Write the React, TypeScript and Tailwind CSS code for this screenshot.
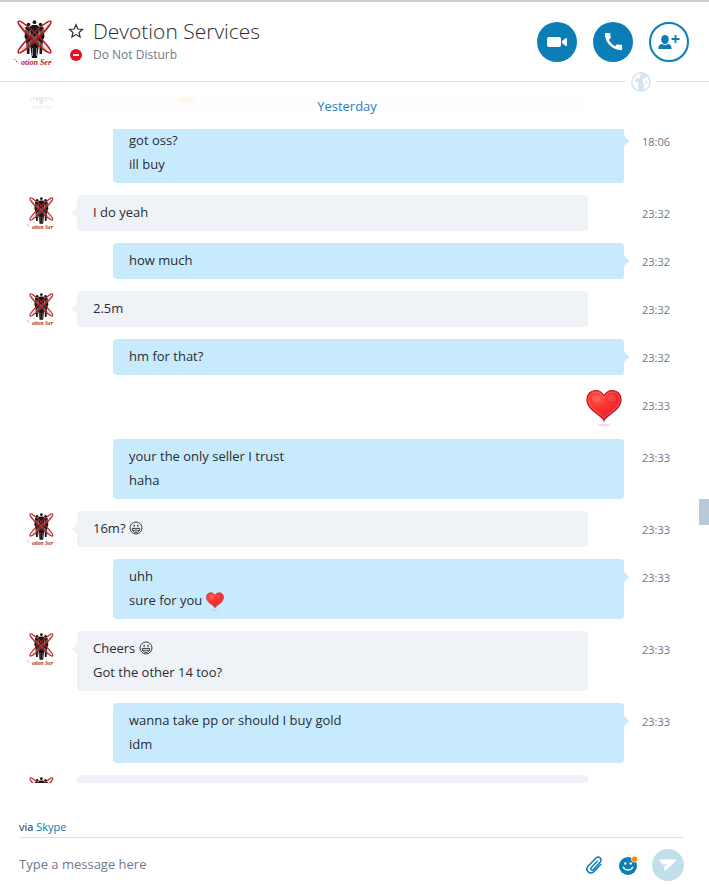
import React from 'react';
import { clsx } from 'clsx';
import { MdCall } from 'react-icons/md';

interface Message {
  id: number;
  own: boolean;
  time?: string;
  lines: React.ReactNode[];
  tail?: boolean;
  heart?: boolean;
}

const GrinIcon = ({ className }: { className?: string }) => (
  <svg viewBox="0 0 14 14" className={className} role="img" aria-label="grin">
    <circle cx="7" cy="7" r="6" fill="none" stroke="#3a3a42" strokeWidth="1" />
    <path d="M3.2 7.4h7.600c0 2.600-1.600 4-3.800 4s-3.800-1.400-3.800-4z" fill="none" stroke="#3a3a42" strokeWidth="1" />
    <path d="M3.800 9.300h6.400" stroke="#3a3a42" strokeWidth=".9" />
    <path d="M5.100 3.700v2M8.900 3.700v2" stroke="#3a3a42" strokeWidth="1.300" />
  </svg>
);

const HeartIcon = ({ id, className }: { id: string; className?: string }) => (
  <svg viewBox="0 0 36 38" className={className} role="img" aria-label="heart">
    <defs>
      <radialGradient id={id} cx=".33" cy=".28" r=".75">
        <stop offset="0" stopColor="#ff5a48" />
        <stop offset=".4" stopColor="#f93430" />
        <stop offset="1" stopColor="#e3202c" />
      </radialGradient>
    </defs>
    <ellipse cx="18" cy="36" rx="6" ry="1.300" fill="#ef6b6b" opacity=".25" />
    <path
      d="M18 31.500C16 26 1 21.500 1 10.800 1 5 4.800 1.500 9.500 1.500c4 0 6.800 2 8.500 5.300C19.700 3.500 22.500 1.500 26.500 1.500c4.700 0 8.500 3.500 8.500 9.300C35 21.500 20 26 18 31.500z"
      fill={`url(#${id})`}
      stroke="#c01526"
      strokeWidth="1.200"
    />
    <path
      d="M18 28.600C15 24 2.600 20 2.600 10.800c0-4.700 3-7.700 6.900-7.700 4 0 6.800 2.200 8.500 6 1.700-3.800 4.500-6 8.500-6 3.900 0 6.900 3 6.900 7.700C33.400 20 21 24 18 28.600z"
      fill="none"
      stroke="#ff8a84"
      strokeWidth=".7"
      opacity=".7"
    />
    <ellipse cx="10" cy="9.500" rx="4" ry="3.500" fill="#fff" opacity=".1" />
    <ellipse cx="26" cy="9" rx="4" ry="3.500" fill="#fff" opacity=".1" />
  </svg>
);

const Avatar = ({ className }: { className?: string }) => (
  <svg viewBox="0 0 40 50" className={className} role="img" aria-label="Devotion Services">
    <g fill="#161616">
      <circle cx="20.500" cy="5.200" r="1.900" />
      <circle cx="14.500" cy="7.500" r="1.800" />
      <circle cx="26.500" cy="7.500" r="1.800" />
      <path d="M18.300 8h4.400l4 2.500.8 9-1.500 4-1.500 7-1.500 10.500h-5L16.500 31 15 23.500l-1.500-4 .8-9z" />
      <path d="M11.500 10h4v27h-2.500l-1-14-1.500-3zM29.500 10h-4v27h2.500l1-14 1.500-3z" />
    </g>
    <path d="M16 13v6M25 13v6M18.500 31v8M22.500 31v8" stroke="#aaa" strokeWidth=".8" />
    <g fill="none" stroke="#d98a88" strokeWidth="2.600" opacity=".5">
      <path d="M6 8l27 25M35 8L8 33" />
    </g>
    <g fill="none" stroke="#b01e21" strokeWidth="1.500">
      <ellipse cx="20.500" cy="20" rx="3.400" ry="22.500" transform="rotate(-46 20.500 20)" />
      <ellipse cx="20.500" cy="20" rx="3.400" ry="22.500" transform="rotate(46 20.500 20)" />
    </g>
    <path d="M0 41.500l1.500 2 3 2.500M36 45.500l2-1M38 42v.5" fill="none" stroke="#b3272b" strokeWidth="1" strokeDasharray="1.500 1.500" />
    <text x="7" y="48" fill="#b3272b" className="font-['Liberation_Serif',serif] text-[8px] font-bold italic">
      otion Ser
    </text>
  </svg>
);

const StarIcon = () => (
  <svg viewBox="0 0 16 16" className="size-4">
    <path
      d="M8 1.700l1.900 4.300 4.700.4-3.600 3.100 1.100 4.600L8 11.600l-4.100 2.500L5 9.500 1.400 6.400l4.700-.4z"
      fill="none"
      stroke="#2b2c33"
      strokeWidth="1.200"
    />
  </svg>
);

const DndIcon = () => (
  <svg viewBox="0 0 12 12" className="size-3" role="img" aria-label="Do Not Disturb">
    <circle cx="6" cy="6" r="6" fill="#e81123" />
    <path d="M3 6h6" stroke="#fff" strokeWidth="1.800" />
  </svg>
);

const VideoIcon = () => (
  <svg viewBox="0 0 20 10" className="h-[10px] w-5" fill="#fff">
    <rect width="14" height="10" rx="2" />
    <path d="M15 4l3.500-2.700q1.500-1 1.500.4v6.600q0 1.400-1.500.4L15 6z" />
  </svg>
);

const AddPersonIcon = () => (
  <svg viewBox="0 0 22 16" className="h-4 w-[22px]" fill="#0a7eb5">
    <ellipse cx="7" cy="5.500" rx="3.800" ry="4.500" />
    <path d="M.5 15v-1.500c0-2.200 2-3.500 3.700-3.500 1.600 1.300 4 1.300 5.600 0 1.700 0 3.700 1.300 3.700 3.500V15z" />
    <path d="M17.500 1v8M13.500 5h8" stroke="#0a7eb5" strokeWidth="1.800" />
  </svg>
);

const GlobeIcon = () => (
  <svg viewBox="0 0 20 20" className="size-5">
    <circle cx="10" cy="10" r="10" fill="#d8e4ed" />
    <path
      d="M2 7.500C3 4.500 5.500 2.300 8.500 1.700l2 .8-1.700 1.300.5 1.500-1.800 1.500-2.500.3L3.500 8.800l3 1.700 1 2-.5 2 .8 3.300C4 16.500 1.700 13.500 1.600 10z"
      fill="#fff"
    />
    <path d="M12 7.200l2.500-1.700 2-.3c2.300 3 2.300 7.500-.3 10.500l-2.700 1.800-.7-2 .5-3-1.300-2z" fill="#fff" />
    <path d="M14.500 8.500l2 .7-.5 2.300-1.500-1zM4.500 6l1.500-1.300.8.8L5.500 7z" fill="#d8e4ed" />
  </svg>
);

const PaperclipIcon = () => (
  <svg viewBox="0 0 18 20" className="h-5 w-[18px]" fill="none" stroke="#0a7eb5" strokeWidth="1.500" strokeLinecap="round">
    <path d="M12.200 6.200L6.300 12.600C5 14.200 7 16 8.500 14.500L15.200 7C17.500 4 13.800.3 10.800 3.200L3 11.200C-.3 15 4.500 20.300 8.800 16.600L15.800 9.200" />
  </svg>
);

const EmoticonIcon = () => (
  <svg viewBox="0 0 19 19" className="size-[19px]">
    <circle cx="9" cy="10" r="9" fill="#0a7eb5" />
    <circle cx="6.300" cy="7.500" r="1.200" fill="#fff" />
    <circle cx="11.700" cy="7.500" r="1.200" fill="#fff" />
    <path d="M4.300 11.300c1.600 3.600 7.800 3.600 9.400 0" fill="none" stroke="#fff" strokeWidth="1.400" strokeLinecap="round" />
    <circle cx="15.500" cy="3.200" r="3.200" fill="#fff" />
    <circle cx="15.500" cy="3.200" r="2.700" fill="#ff8c00" />
  </svg>
);

const SendIcon = () => (
  <svg viewBox="0 0 18 14" className="h-[14px] w-[18px]" fill="#fff">
    <path d="M1 1.500h16q.9.200.3 1L6.500 12.700Q5.200 13.500 5.200 12V8.500L8.500 6 3.800 6.700Q2.500 5.500.3 2.700 0 1.500 1 1.500z" />
  </svg>
);

const Tail = ({ own }: { own: boolean }) => (
  <svg
    viewBox="0 0 5 14"
    className={clsx('absolute top-[11px] h-[14px] w-[5px]', own ? 'left-full' : 'right-full -scale-x-100')}
    fill={own ? '#c7ebfc' : '#eff2f7'}
  >
    <path d="M0 0c0 3 2 4 4 5.500q2 1.500 0 3C2 10 0 11 0 14z" />
  </svg>
);

const messages: Message[] = [
  {
    id: 1,
    own: false,
    tail: true,
    lines: [<span className="ml-[84px] inline-block size-[18px] rounded-full bg-amber-400 align-[-7px]" />],
  },
  { id: 2, own: true, time: '18:06', tail: true, lines: ['got oss?', 'ill buy'] },
  { id: 3, own: false, time: '23:32', tail: true, lines: ['I do yeah'] },
  { id: 4, own: true, time: '23:32', tail: true, lines: ['how much'] },
  { id: 5, own: false, time: '23:32', tail: true, lines: ['2.5m'] },
  { id: 6, own: true, time: '23:32', tail: true, lines: ['hm for that?'] },
  { id: 7, own: true, time: '23:33', heart: true, lines: [] },
  { id: 8, own: true, time: '23:33', lines: ['your the only seller I trust', 'haha'] },
  {
    id: 9,
    own: false,
    time: '23:33',
    tail: true,
    lines: [<>16m? <GrinIcon className="inline-block size-[14px] align-[-2px]" /></>],
  },
  {
    id: 10,
    own: true,
    time: '23:33',
    tail: true,
    lines: ['uhh', <>sure for you <HeartIcon id="heart-small" className="inline-block h-[19px] w-[18px] align-[-6px]" /></>],
  },
  {
    id: 11,
    own: false,
    time: '23:33',
    tail: true,
    lines: [<>Cheers <GrinIcon className="inline-block size-[14px] align-[-2px]" /></>, 'Got the other 14 too?'],
  },
  { id: 12, own: true, time: '23:33', tail: true, lines: ['wanna take pp or should I buy gold', 'idm'] },
  { id: 13, own: false, tail: true, lines: [''] },
];

const MessageRow = ({ message }: { message: Message }) => {
  const { own, time, lines, tail, heart } = message;

  return (
    <li className="flex items-start">
      <div className={clsx('shrink-0', own ? 'w-[113px]' : 'w-[77px] pl-[27px]')}>
        {!own && <Avatar className="h-[35px] w-7" />}
      </div>
      {heart ? (
        <div className="flex h-10 flex-1 justify-end pt-0.5 pr-0.5">
          <HeartIcon id="heart-large" className="h-[38px] w-9" />
        </div>
      ) : (
        <div
          className={clsx(
            'relative min-h-9 flex-1 rounded-[4px] px-4 pt-[5px] pb-[7px]',
            own ? 'bg-[#c7ebfc]' : 'mr-9 bg-[#eff2f7]'
          )}
        >
          {lines.map((line, i) => (
            <p key={i} className="h-6 text-[13px] leading-6 text-[#2b2c33]">
              {line}
            </p>
          ))}
          {tail && <Tail own={own} />}
        </div>
      )}
      <time className="h-9 w-[85px] shrink-0 pl-[18px] text-[11px] leading-[38px] text-[#6e7687]">{time}</time>
    </li>
  );
};

const Header = () => (
  <header className="relative z-10 flex h-[82px] shrink-0 items-center border-t-2 border-b border-t-[#c9cdd2] border-b-[#dbe4ec] pr-5 pl-3.5">
    <Avatar className="h-[50px] w-10" />
    <div className="ml-3.5 flex-1 pb-0.5">
      <div className="flex items-center gap-[9px]">
        <button type="button" aria-label="Add to favourites">
          <StarIcon />
        </button>
        <h1 className="text-[21px] leading-7 font-light text-[#2b2c33]">Devotion Services</h1>
      </div>
      <div className="flex items-center gap-[11px] pl-0.5">
        <DndIcon />
        <p className="text-xs leading-5 text-[#6e7a8f]">Do Not Disturb</p>
      </div>
    </div>
    <div className="flex gap-4">
      <button type="button" aria-label="Video call" className="flex size-10 items-center justify-center rounded-full bg-[#0a7eb5]">
        <VideoIcon />
      </button>
      <button type="button" aria-label="Call" className="flex size-10 items-center justify-center rounded-full bg-[#0a7eb5] text-white">
        <MdCall size={23} />
      </button>
      <button
        type="button"
        aria-label="Add people"
        className="flex size-10 items-center justify-center rounded-full border-2 border-[#0a7eb5]"
      >
        <AddPersonIcon />
      </button>
    </div>
    <div className="absolute right-[53px] -bottom-[11px] bg-white px-[5px]">
      <GlobeIcon />
    </div>
  </header>
);

const Composer = () => (
  <footer className="shrink-0 pt-9 pr-[25px] pl-[19px]">
    <p className="border-b border-[#dbe4ec] pb-0.5 text-[11px] leading-4 text-[#2b2c33]">
      via <a href="#skype" className="text-[#0a78be]">Skype</a>
    </p>
    <form className="flex h-[54px] items-center" onSubmit={(e) => e.preventDefault()}>
      <input
        type="text"
        aria-label="Message"
        placeholder="Type a message here"
        className="min-w-0 flex-1 text-[13px] text-[#2b2c33] outline-none placeholder:text-[#6e7a8f]"
      />
      <button type="button" aria-label="Attach file" className="mr-4">
        <PaperclipIcon />
      </button>
      <button type="button" aria-label="Emoticons" className="mr-3.5">
        <EmoticonIcon />
      </button>
      <button type="submit" aria-label="Send" className="flex size-8 items-center justify-center rounded-full bg-[#c1deeb]">
        <SendIcon />
      </button>
    </form>
  </footer>
);

export default function App() {
  return (
    <div className="flex h-screen flex-col bg-white font-['Open_Sans','Noto_Sans',sans-serif]">
      <Header />
      <main className="relative min-h-0 flex-1 pt-[15px]">
        <div className="h-full overflow-hidden">
          <ul className="-mt-[22px] flex flex-col gap-3">
            {messages.map((message) => (
              <MessageRow key={message.id} message={message} />
            ))}
          </ul>
        </div>
        <div className="absolute inset-x-0 top-0 h-[47px] bg-linear-to-b from-white/90 from-60% to-white to-80% pt-3.5 pr-[15px] text-center text-[13px] leading-5 text-[#2a80bd]">
          Yesterday
        </div>
        <div className="absolute top-[417px] right-0 h-[26px] w-2.5 bg-[#b8cad9]" />
      </main>
      <Composer />
    </div>
  );
}
